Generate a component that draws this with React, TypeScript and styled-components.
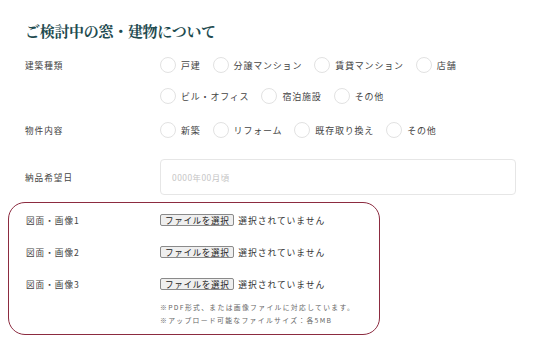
import React from "react";
import styled, { createGlobalStyle } from "styled-components";

const Global = createGlobalStyle`
  html, body { margin: 0; padding: 0; background: #fff; }
  body { font-family: "Noto Sans CJK JP", "Noto Sans", sans-serif; color: #444; }
`;

const Page = styled.div`
  width: 540px;
  height: 350px;
  box-sizing: border-box;
  padding: 21px 24px 0 25px;
  overflow: hidden;
`;

const Heading = styled.h2`
  margin: 0 0 16px;
  font-family: "Noto Serif CJK JP", "Noto Sans CJK JP", serif;
  font-size: 15px;
  line-height: 20px;
  font-weight: 700;
  color: #1e4b50;
  letter-spacing: -0.3px;
`;

const Row = styled.div<{ $gap?: number }>`
  display: grid;
  grid-template-columns: 135px 1fr;
  align-items: start;
  margin-bottom: ${(p) => p.$gap ?? 0}px;
`;

const Label = styled.div<{ $h?: number }>`
  font-size: 8.6px;
  letter-spacing: 1px;
  line-height: ${(p) => p.$h ?? 16}px;
  color: #444;
`;

const Radios = styled.div<{ $w: number }>`
  display: flex;
  flex-wrap: wrap;
  row-gap: 15px;
  width: ${(p) => p.$w}px;
`;

const RadioItem = styled.label`
  display: flex;
  align-items: center;
  gap: 5px;
  margin-right: 12px;
  height: 16px;
  font-size: 9px;
  letter-spacing: 0.8px;
  color: #444;
`;

const Circle = styled.span`
  width: 16px;
  height: 16px;
  border-radius: 50%;
  border: 1px solid #e2e2e2;
  background: #fff;
  box-sizing: border-box;
  flex: none;
`;

const DateInput = styled.div`
  height: 36px;
  box-sizing: border-box;
  border: 1px solid #e6e6e6;
  border-radius: 4px;
  display: flex;
  align-items: center;
  padding-left: 11px;
  font-size: 8.4px;
  color: #c4c4c4;
  letter-spacing: 0.5px;
`;

const UploadBox = styled.div`
  margin: 7px 0 0 -17px;
  width: 372px;
  height: 133px;
  box-sizing: border-box;
  border: 1.3px solid #8c2b40;
  border-radius: 17px;
  padding: 10px 0 0 17px;
`;

const FileRow = styled.div`
  display: grid;
  grid-template-columns: 134px 1fr;
  align-items: center;
  height: 14px;
  margin-bottom: 18px;
  &:nth-child(3) { margin-bottom: 10px; }
`;

const FileControl = styled.div`
  display: flex;
  align-items: center;
  gap: 4px;
  font-size: 8.8px;
  letter-spacing: 0.9px;
  color: #333;
`;

const FileButton = styled.span`
  display: inline-flex;
  align-items: center;
  height: 12px;
  box-sizing: border-box;
  padding: 0 4px;
  border: 1px solid #8a8a8a;
  border-radius: 2px;
  background: #efefef;
  font-size: 8.6px;
  letter-spacing: 0.6px;
  color: #222;
`;

const Notes = styled.div`
  margin-left: 134px;
  font-size: 6.8px;
  letter-spacing: 1.35px;
  line-height: 13px;
  color: #666;
`;

const buildingTypes = ["戸建", "分譲マンション", "賃貸マンション", "店舗", "ビル・オフィス", "宿泊施設", "その他"];
const propertyTypes = ["新築", "リフォーム", "既存取り換え", "その他"];

export default function App() {
  return (
    <Page>
      <Global />
      <Heading>ご検討中の窓・建物について</Heading>
      <Row $gap={18}>
        <Label>建築種類</Label>
        <Radios $w={315}>
          {buildingTypes.map((t) => (
            <RadioItem key={t}>
              <Circle />
              {t}
            </RadioItem>
          ))}
        </Radios>
      </Row>
      <Row $gap={21}>
        <Label>物件内容</Label>
        <Radios $w={360}>
          {propertyTypes.map((t) => (
            <RadioItem key={t}>
              <Circle />
              {t}
            </RadioItem>
          ))}
        </Radios>
      </Row>
      <Row>
        <Label $h={36}>納品希望日</Label>
        <DateInput>0000年00月頃</DateInput>
      </Row>
      <UploadBox>
        {[1, 2, 3].map((n) => (
          <FileRow key={n}>
            <Label $h={14}>図面・画像{n}</Label>
            <FileControl>
              <FileButton>ファイルを選択</FileButton>
              選択されていません
            </FileControl>
          </FileRow>
        ))}
        <Notes>
          ※PDF形式、または画像ファイルに対応しています。
          <br />
          ※アップロード可能なファイルサイズ：各5MB
        </Notes>
      </UploadBox>
    </Page>
  );
}
